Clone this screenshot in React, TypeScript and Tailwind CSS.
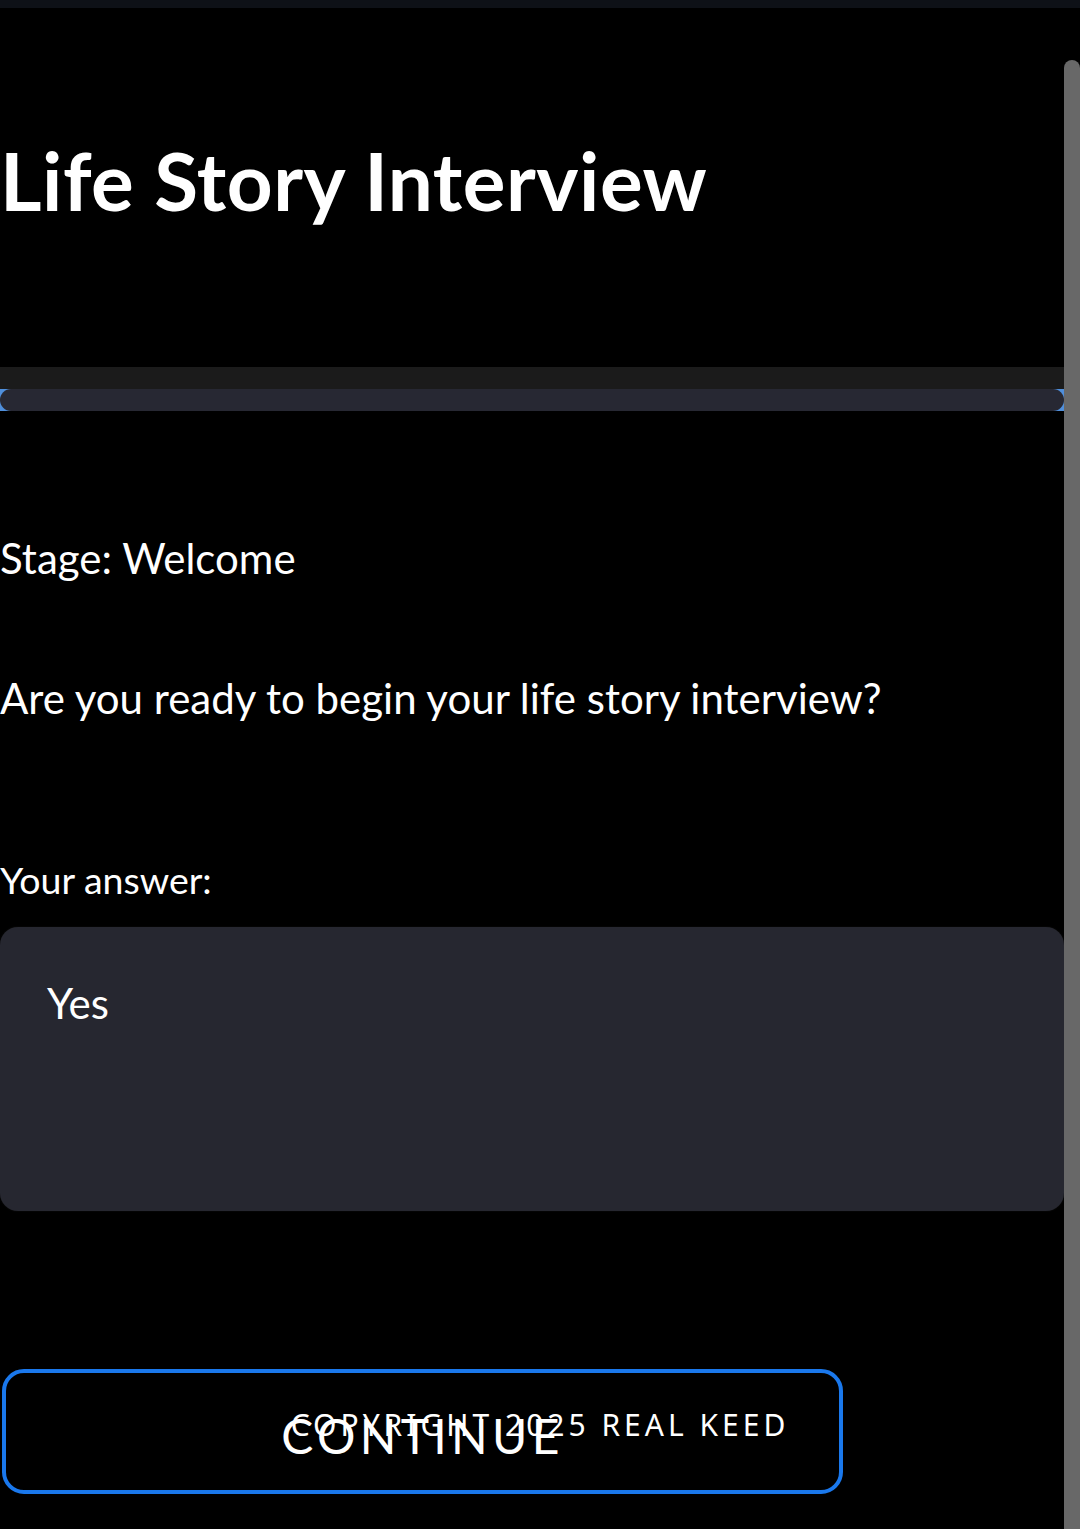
import React from "react";

function Scrollbar() {
  return (
    <div className="w-[16px] shrink-0 pt-[52px]">
      <div className="h-full rounded-t-full bg-[#686868]" />
    </div>
  );
}

export default function App() {
  return (
    <div className="relative h-[1529px] w-[1080px] overflow-hidden bg-black text-white font-['Lato',sans-serif]">
      <div className="h-2 bg-[#0e1117]" />
      <div className="flex h-[1521px]">
        <main className="w-[1064px] shrink-0">
          <h1 className="mt-[124px] text-[80px] font-bold leading-[96px] tracking-[0.5px]">Life Story Interview</h1>

          <div className="mt-[139px] h-[22px] bg-[#1b1b1b]" />
          <div className="h-[22px] bg-[#4f8fdc]">
            <div className="h-full rounded-full bg-[#272833]" />
          </div>

          <p className="mt-[122px] text-[42px] leading-[50px]">Stage: Welcome</p>
          <p className="mt-[90px] text-[42px] leading-[50px]">Are you ready to begin your life story interview?</p>

          <label className="mt-[134px] block text-[37.5px] leading-[45px]">Your answer:</label>
          <div className="mt-[25px] h-[284px] rounded-[18px] bg-[#262730] pl-[47px] pt-[51px] shadow-[0_0_2px_#111]">
            <span className="text-[42px] leading-[50px]">Yes</span>
          </div>

          <button className="ml-[2px] mt-[158px] flex h-[125px] w-[841px] items-center justify-center rounded-[22px] border-4 border-[#1a78ec] bg-black pt-[8px] text-[48px] uppercase tracking-[0.09em] text-white">
            Continue
          </button>
        </main>
        <Scrollbar />
      </div>

      <footer className="absolute inset-x-0 top-[1405px] text-center font-['Noto_Sans',sans-serif] text-[30px] leading-[40px] tracking-[4px] text-white">
        COPYRIGHT 2025 REAL KEED
      </footer>
    </div>
  );
}
